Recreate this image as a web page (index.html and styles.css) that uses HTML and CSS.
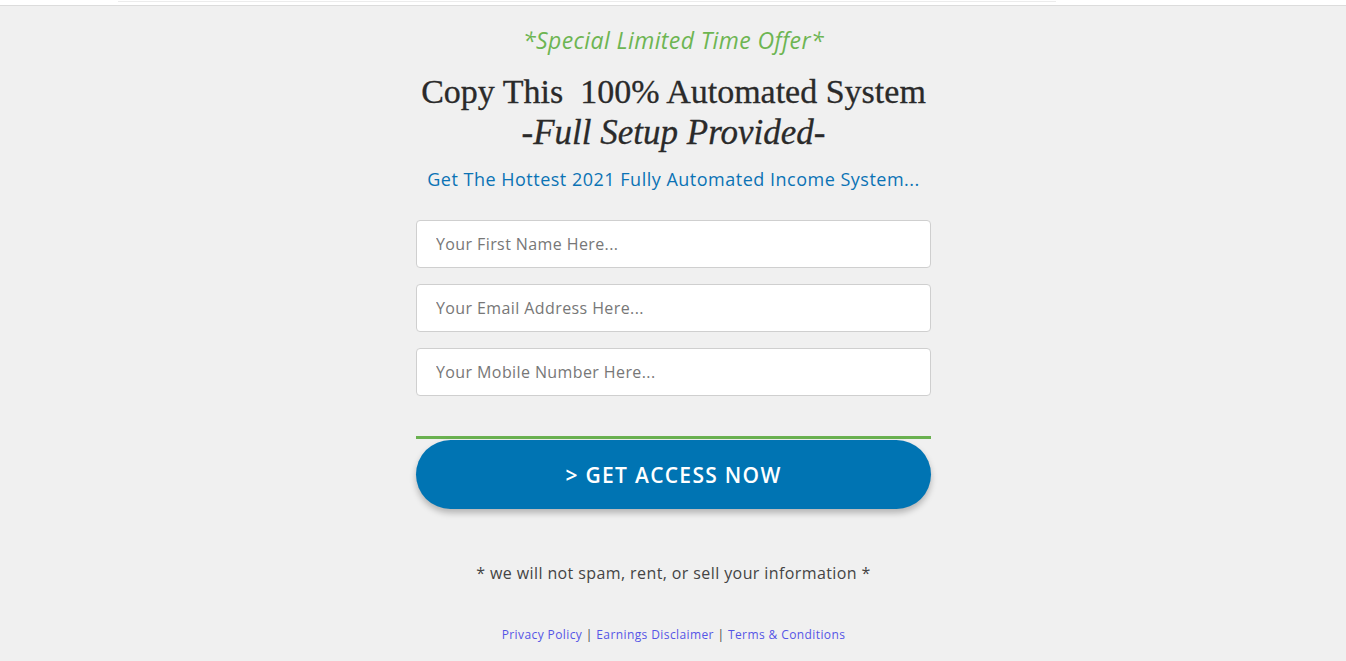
FILE: index.html
```html
<!DOCTYPE html>
<html lang="en">

<head>
    <meta charset="UTF-8">
    <meta name="viewport" content="width=device-width, initial-scale=1.0">
    <title>Special Limited Time Offer</title>
    <link rel="stylesheet" href="styles.css">
</head>

<body>
    <div class="topbar">
        <div class="topbar-inner"></div>
    </div>

    <div class="container">
        <p class="offer">*Special Limited Time Offer*</p>
        <h1>Copy This&nbsp; 100% Automated System<br><em>-Full Setup Provided-</em></h1>
        <p class="subtitle">Get The Hottest 2021 Fully Automated Income System...</p>

        <form id="optinForm">
            <input type="text" name="firstName" placeholder="Your First Name Here...">
            <input type="email" name="email" placeholder="Your Email Address Here...">
            <input type="tel" name="mobile" placeholder="Your Mobile Number Here...">

            <div class="divider"></div>
            <button type="submit">&gt; GET ACCESS NOW</button>
        </form>

        <p class="nospam">* we will not spam, rent, or sell your information *</p>

        <p class="links">
            <a href="#">Privacy Policy</a> | <a href="#">Earnings Disclaimer</a> | <a href="#">Terms &amp; Conditions</a>
        </p>
    </div>
</body>

</html>
```

FILE: styles.css
```css
body {
    font-family: "Open Sans", Arial, sans-serif;
    background-color: #f0f0f0;
    margin: 0;
    padding: 0;
}

.topbar {
    height: 5px;
    background-color: #fff;
    border-bottom: 1px solid #dcdcdc;
}

.topbar-inner {
    margin-left: 118px;
    width: 938px;
    height: 1px;
    border-bottom: 1px solid #ececec;
}

.container {
    width: 515px;
    margin: 0 auto;
    padding-left: 1px;
    text-align: center;
}

.offer {
    margin: 19px 0 0;
    font-size: 23px;
    font-style: italic;
    letter-spacing: 0.4px;
    color: #6db552;
    line-height: 30px;
}

h1 {
    margin: 16px -20px 0;
    font-family: "Liberation Serif", "Times New Roman", serif;
    font-weight: normal;
    font-size: 34px;
    line-height: 41px;
    color: #2a2a2a;
    -webkit-text-stroke: 0.3px #2a2a2a;
    white-space: nowrap;
}

h1 em {
    font-size: 35px;
}

.subtitle {
    margin: 13px 0 0;
    font-size: 18px;
    letter-spacing: 0.5px;
    color: #0b73b5;
    line-height: 26px;
}

form {
    display: flex;
    flex-direction: column;
    gap: 16px;
    margin-top: 28px;
}

input {
    height: 48px;
    padding: 0 19px;
    border: 1px solid #cfcfcf;
    border-radius: 4px;
    box-sizing: border-box;
    background-color: #fff;
    font-family: "Open Sans", Arial, sans-serif;
    font-size: 16px;
    letter-spacing: 0.4px;
    color: #333;
}

input::placeholder {
    color: #777;
}

.divider {
    height: 3px;
    margin-top: 24px;
    margin-bottom: -15px;
    background-color: #6ab150;
}

button[type="submit"] {
    height: 69px;
    border: none;
    border-radius: 35px;
    background-color: #0074b3;
    color: #fff;
    font-family: "Open Sans", Arial, sans-serif;
    font-size: 21px;
    font-weight: 600;
    letter-spacing: 1.3px;
    box-shadow: 0 4px 6px rgba(0, 0, 0, 0.25);
    cursor: pointer;
}

.nospam {
    margin: 54px 0 0;
    font-size: 16px;
    letter-spacing: 0.4px;
    color: #444;
    line-height: 20px;
}

.links {
    margin: 43px 0 0;
    font-size: 12px;
    letter-spacing: 0.4px;
    color: #444;
}

.links a {
    color: #5555e6;
    text-decoration: none;
}
```
